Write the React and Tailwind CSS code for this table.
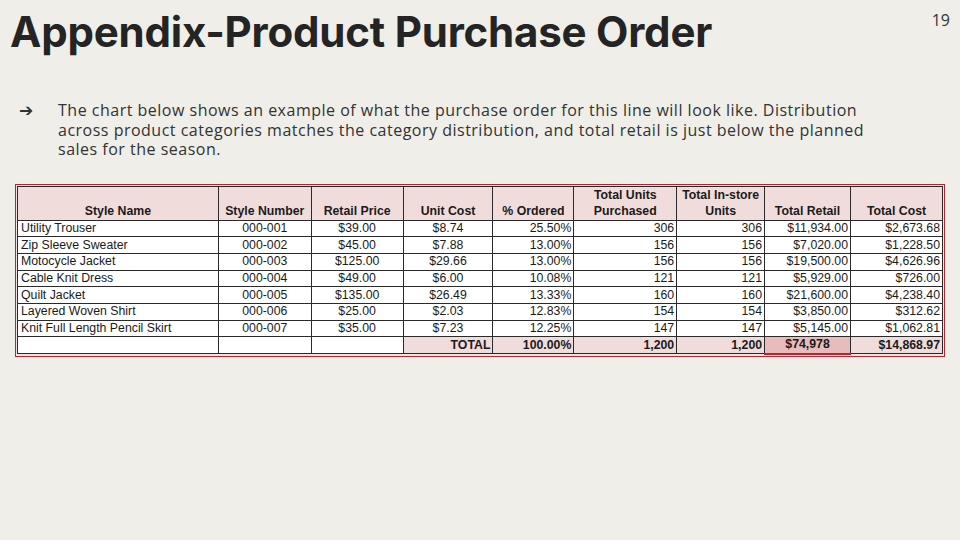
import React from "react";

const rows = [
  ["Utility Trouser", "000-001", "$39.00", "$8.74", "25.50%", "306", "306", "$11,934.00", "$2,673.68"],
  ["Zip Sleeve Sweater", "000-002", "$45.00", "$7.88", "13.00%", "156", "156", "$7,020.00", "$1,228.50"],
  ["Motocycle Jacket", "000-003", "$125.00", "$29.66", "13.00%", "156", "156", "$19,500.00", "$4,626.96"],
  ["Cable Knit Dress", "000-004", "$49.00", "$6.00", "10.08%", "121", "121", "$5,929.00", "$726.00"],
  ["Quilt Jacket", "000-005", "$135.00", "$26.49", "13.33%", "160", "160", "$21,600.00", "$4,238.40"],
  ["Layered Woven Shirt", "000-006", "$25.00", "$2.03", "12.83%", "154", "154", "$3,850.00", "$312.62"],
  ["Knit Full Length Pencil Skirt", "000-007", "$35.00", "$7.23", "12.25%", "147", "147", "$5,145.00", "$1,062.81"],
];

const widths = [201, 93, 92, 90, 81, 103, 88, 86, 92];
const align = ["text-left pl-[3px]", "text-center", "text-center", "text-center", "text-right pr-[2px]", "text-right pr-[2px]", "text-right pr-[2px]", "text-right pr-[2px]", "text-right pr-[2px]"];

export default function App() {
  const cell = "border border-[#2a2a2a] p-0 leading-[15px] whitespace-nowrap overflow-hidden";
  return (
    <div className="w-[960px] h-[540px] bg-[#efeee8] overflow-hidden relative" style={{ fontFamily: "'Open Sans', 'Noto Sans', sans-serif" }}>
      <div className="flex justify-between items-start">
        <h1 className="ml-[10px] mt-[8px] text-[42px] leading-[48px] font-bold text-[#242424] tracking-[-0.2px]" style={{ fontFamily: "Inter, 'Liberation Sans', sans-serif" }}>
          Appendix-Product Purchase Order
        </h1>
        <div className="mr-[10px] mt-[10px] text-[16px] leading-[20px] text-[#333]">19</div>
      </div>

      <div className="flex mt-[45px] text-[16px] leading-[19.5px] text-[#333] tracking-[0.5px]">
        <div className="w-[58px] pl-[19px] shrink-0" style={{ fontFamily: "'DejaVu Sans', sans-serif" }}>
          <span className="text-[17px]">➔</span>
        </div>
        <p className="w-[820px]">
          The chart below shows an example of what the purchase order for this line will look like. Distribution across product categories matches the category distribution, and total retail is just below the planned sales for the season.
        </p>
      </div>

      <div className="ml-[15px] mt-[24px] w-[930px] border border-[#b3262e] p-px bg-[#f3e4e4]">
        <table className="border-collapse text-[12.3px] text-[#1a1a1a] table-fixed" style={{ fontFamily: "'Liberation Sans', Arial, sans-serif" }}>
          <colgroup>
            {widths.map((w, i) => (
              <col key={i} style={{ width: w }} />
            ))}
          </colgroup>
          <thead>
            <tr className="h-[33px] bg-[#f1dcdc]">
              {["Style Name", "Style Number", "Retail Price", "Unit Cost", "% Ordered", "Total Units\nPurchased", "Total In-store\nUnits", "Total Retail", "Total Cost"].map((h, i) => (
                <th key={i} className={`${cell} text-[12.3px] font-bold text-center align-bottom pb-px whitespace-pre-line leading-[16px]`}>
                  {h}
                </th>
              ))}
            </tr>
          </thead>
          <tbody>
            {rows.map((r, ri) => (
              <tr key={ri} className="h-[16.7px] bg-white">
                {r.map((v, i) => (
                  <td key={i} className={`${cell} ${align[i]}`}>{v}</td>
                ))}
              </tr>
            ))}
            <tr className="h-[16.7px] font-bold">
              <td className={`${cell} bg-white`}></td>
              <td className={`${cell} bg-white`}></td>
              <td className={`${cell} bg-white`}></td>
              <td className={`${cell} bg-[#f1dcdc] text-right pr-[2px]`}>TOTAL</td>
              <td className={`${cell} bg-[#f1dcdc] text-right pr-[2px]`}>100.00%</td>
              <td className={`${cell} bg-[#f1dcdc] text-right pr-[2px]`}>1,200</td>
              <td className={`${cell} bg-[#f1dcdc] text-right pr-[2px]`}>1,200</td>
              <td className={`${cell} bg-[#e8bcbc] text-center border-b-2 border-b-[#c0202a]`}>$74,978</td>
              <td className={`${cell} bg-[#f1dcdc] text-right pr-[2px]`}>$14,868.97</td>
            </tr>
          </tbody>
        </table>
      </div>
    </div>
  );
}
